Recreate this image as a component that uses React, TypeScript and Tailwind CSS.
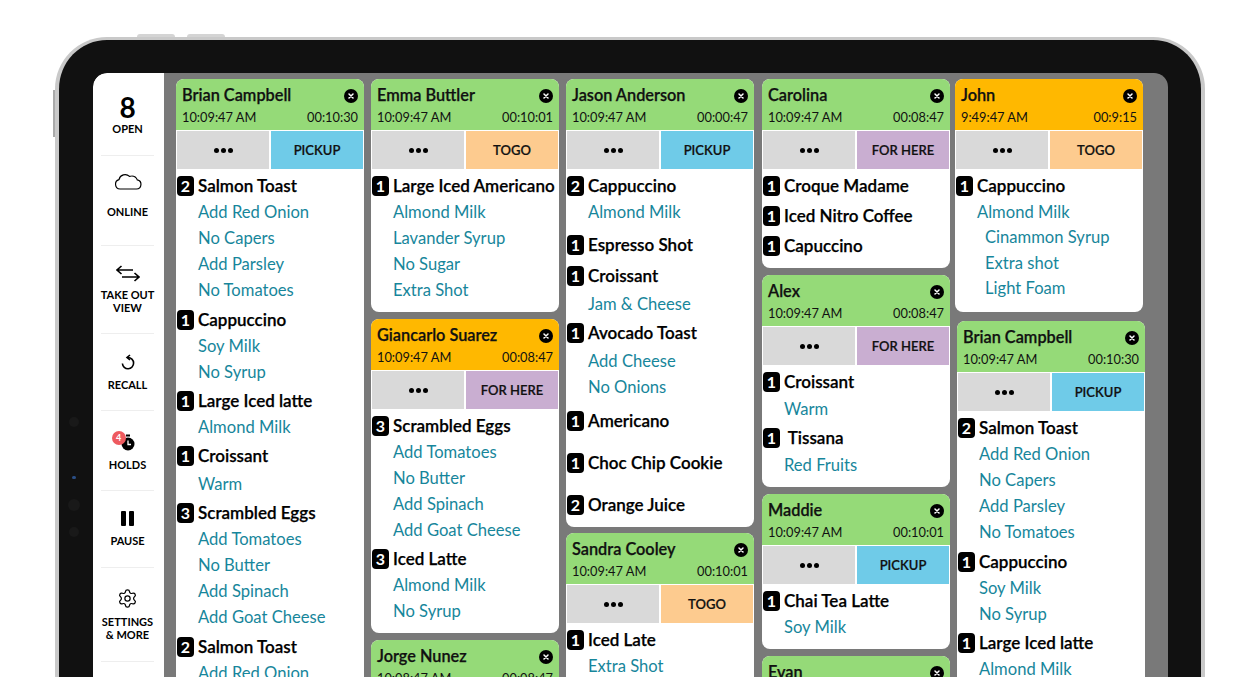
import { Settings } from "lucide-react";

type Row = { q?: number; t: string; c?: string };

type Order = {
  name: string;
  time: string;
  elapsed: string;
  late?: boolean;
  kind: "PICKUP" | "TOGO" | "FOR HERE";
  rows: Row[];
  className?: string;
};

const kindColor = {
  PICKUP: "bg-[#6fcbe8]",
  TOGO: "bg-[#fdcb8f]",
  "FOR HERE": "bg-[#c9aed1]",
};

const salmon: Row[] = [
  { q: 2, t: "Salmon Toast" },
  { t: "Add Red Onion" },
  { t: "No Capers" },
  { t: "Add Parsley" },
  { t: "No Tomatoes" },
  { q: 1, t: "Cappuccino", c: "mt-[4px]" },
  { t: "Soy Milk" },
  { t: "No Syrup" },
  { q: 1, t: "Large Iced latte", c: "mt-[3px]" },
  { t: "Almond Milk" },
];

const columns: { className: string; orders: Order[] }[] = [
  {
    className: "",
    orders: [
      {
        name: "Brian Campbell",
        time: "10:09:47 AM",
        elapsed: "00:10:30",
        kind: "PICKUP",
        rows: [
          ...salmon,
          { q: 1, t: "Croissant", c: "mt-[3px]" },
          { t: "Warm", c: "mt-[2px]" },
          { q: 3, t: "Scrambled Eggs", c: "mt-[3px]" },
          { t: "Add Tomatoes" },
          { t: "No Butter" },
          { t: "Add Spinach" },
          { t: "Add Goat Cheese" },
          { q: 2, t: "Salmon Toast", c: "mt-[4px]" },
          { t: "Add Red Onion" },
        ],
      },
    ],
  },
  {
    className: "ml-[7px]",
    orders: [
      {
        name: "Emma Buttler",
        time: "10:09:47 AM",
        elapsed: "00:10:01",
        kind: "TOGO",
        rows: [
          { q: 1, t: "Large Iced Americano" },
          { t: "Almond Milk" },
          { t: "Lavander Syrup" },
          { t: "No Sugar" },
          { t: "Extra Shot" },
        ],
      },
      {
        name: "Giancarlo Suarez",
        time: "10:09:47 AM",
        elapsed: "00:08:47",
        late: true,
        kind: "FOR HERE",
        className: "mt-[7px]",
        rows: [
          { q: 3, t: "Scrambled Eggs" },
          { t: "Add Tomatoes" },
          { t: "No Butter" },
          { t: "Add Spinach" },
          { t: "Add Goat Cheese" },
          { q: 3, t: "Iced Latte", c: "mt-[3px]" },
          { t: "Almond Milk" },
          { t: "No Syrup" },
        ],
      },
      {
        name: "Jorge Nunez",
        time: "10:08:47 AM",
        elapsed: "00:08:47",
        kind: "TOGO",
        className: "mt-[7px]",
        rows: [],
      },
    ],
  },
  {
    className: "ml-[7px]",
    orders: [
      {
        name: "Jason Anderson",
        time: "10:09:47 AM",
        elapsed: "00:00:47",
        kind: "PICKUP",
        rows: [
          { q: 2, t: "Cappuccino" },
          { t: "Almond Milk" },
          { q: 1, t: "Espresso Shot", c: "mt-[7px]" },
          { q: 1, t: "Croissant", c: "mt-[5px]" },
          { t: "Jam & Cheese", c: "mt-[2px]" },
          { q: 1, t: "Avocado Toast", c: "mt-[3px]" },
          { t: "Add Cheese", c: "mt-[2px]" },
          { t: "No Onions" },
          { q: 1, t: "Americano", c: "mt-[8px]" },
          { q: 1, t: "Choc Chip Cookie", c: "mt-[16px]" },
          { q: 2, t: "Orange Juice", c: "mt-[16px]" },
        ],
      },
      {
        name: "Sandra Cooley",
        time: "10:09:47 AM",
        elapsed: "00:10:01",
        kind: "TOGO",
        className: "mt-[6px]",
        rows: [{ q: 1, t: "Iced Late" }, { t: "Extra Shot" }],
      },
    ],
  },
  {
    className: "ml-[8px]",
    orders: [
      {
        name: "Carolina",
        time: "10:09:47 AM",
        elapsed: "00:08:47",
        kind: "FOR HERE",
        rows: [
          { q: 1, t: "Croque Madame" },
          { q: 1, t: "Iced Nitro Coffee", c: "mt-[4px]" },
          { q: 1, t: "Capuccino", c: "mt-[4px]" },
        ],
      },
      {
        name: "Alex",
        time: "10:09:47 AM",
        elapsed: "00:08:47",
        kind: "FOR HERE",
        className: "mt-[7px]",
        rows: [
          { q: 1, t: "Croissant" },
          { t: "Warm", c: "mt-[1px]" },
          { q: 1, t: "\u00a0Tissana", c: "mt-[3px]" },
          { t: "Red Fruits", c: "mt-[1px]" },
        ],
      },
      {
        name: "Maddie",
        time: "10:09:47 AM",
        elapsed: "00:10:01",
        kind: "PICKUP",
        className: "mt-[7px]",
        rows: [{ q: 1, t: "Chai Tea Latte" }, { t: "Soy Milk" }],
      },
      {
        name: "Evan",
        time: "10:09:47 AM",
        elapsed: "00:10:01",
        kind: "PICKUP",
        className: "mt-[7px]",
        rows: [],
      },
    ],
  },
  {
    className: "ml-[5px]",
    orders: [
      {
        name: "John",
        time: "9:49:47 AM",
        elapsed: "00:9:15",
        late: true,
        kind: "TOGO",
        rows: [
          { q: 1, t: "Cappuccino" },
          { t: "Almond Milk" },
          { t: "Cinammon Syrup", c: "-mt-[1px] ml-[8px]" },
          { t: "Extra shot", c: "ml-[8px]" },
          { t: "Light Foam", c: "-mt-[1px] mb-[2px] ml-[8px]" },
        ],
      },
      {
        name: "Brian Campbell",
        time: "10:09:47 AM",
        elapsed: "00:10:30",
        kind: "PICKUP",
        className: "mt-[9px] ml-[2px] -mr-[2px]",
        rows: salmon,
      },
    ],
  },
];

function CloseDot() {
  return (
    <svg width="14" height="14" viewBox="0 0 14 14">
      <circle cx="7" cy="7" r="7" fill="#000" />
      <path d="M5 5l4 4M9 5l-4 4" stroke="#fff" strokeWidth="1.5" strokeLinecap="round" />
    </svg>
  );
}

function Card({ order }: { order: Order }) {
  return (
    <div className={`overflow-hidden rounded-[8px] bg-white ${order.className ?? ""}`}>
      <div className={`h-[51px] px-[6px] pt-[6px] ${order.late ? "bg-[#ffb800]" : "bg-[#95da78]"}`}>
        <div className="flex h-[21px] items-center justify-between">
          <span className="text-[16.300px] font-semibold text-[#111] [-webkit-text-stroke:0.25px_#111]">{order.name}</span>
          <CloseDot />
        </div>
        <div className="mt-[2px] flex h-[20px] items-center justify-between text-[12.800px] text-[#111]">
          <span>{order.time}</span>
          <span>{order.elapsed}</span>
        </div>
      </div>
      <div className="flex h-[39px] gap-[2px] px-[1px] pt-[1px]">
        <div className="flex flex-1 items-center justify-center gap-[2px] bg-[#d9d9d9]">
          <span className="h-[5px] w-[5px] rounded-full bg-black" />
          <span className="h-[5px] w-[5px] rounded-full bg-black" />
          <span className="h-[5px] w-[5px] rounded-full bg-black" />
        </div>
        <div className={`flex flex-1 items-center justify-center pt-[1px] text-[13px] font-semibold text-[#111] [-webkit-text-stroke:0.2px_#111] ${kindColor[order.kind]}`}>
          {order.kind}
        </div>
      </div>
      <div className="pt-[4px] pb-[9px]">
        {order.rows.map((row, i) =>
          row.q ? (
            <div key={i} className={`flex h-[26px] items-center pl-[1px] ${row.c ?? ""}`}>
              <span className="flex h-[20px] w-[17px] shrink-0 items-center justify-center rounded-[4px] bg-black text-[16px] font-bold text-white">
                {row.q}
              </span>
              <span className="ml-[4px] text-[17px] font-semibold text-black [-webkit-text-stroke:0.25px_#000]">{row.t}</span>
            </div>
          ) : (
            <div key={i} className={`flex h-[26px] items-center pl-[22px] text-[16.600px] text-[#17869b] ${row.c ?? ""}`}>
              {row.t}
            </div>
          ),
        )}
      </div>
    </div>
  );
}

function SideItem({ className, label, children }: { className: string; label: string[]; children: React.ReactNode }) {
  return (
    <div className={`mr-[10px] ml-[8px] flex flex-col items-center justify-center border-b border-[#eeeeee] ${className}`}>
      {children}
      {label.map((l) => (
        <span key={l} className="text-[11px] leading-[13px] font-bold whitespace-nowrap text-black">
          {l}
        </span>
      ))}
    </div>
  );
}

function Sidebar() {
  return (
    <div className="w-[71px] shrink-0 rounded-tl-[14px] bg-white">
      <SideItem className="h-[83px] pb-[2px]" label={["OPEN"]}>
        <span className="text-[28px] leading-[30px] font-bold text-black">8</span>
      </SideItem>
      <SideItem className="h-[90px] pb-[12px]" label={["ONLINE"]}>
        <svg width="28" height="19" viewBox="0 0 28 19" fill="none" stroke="#000" strokeWidth="1.200" className="mb-[15px]">
          <path d="M6 18h16.500a4.600 4.600 0 0 0 .8-9.100A6 6 0 0 0 17.500 5a5.200 5.200 0 0 0-2 .4A6.300 6.300 0 0 0 5 8.600a4.800 4.800 0 0 0 1 9.400z" />
        </svg>
      </SideItem>
      <SideItem className="h-[88px]" label={["TAKE OUT", "VIEW"]}>
        <svg width="24" height="17" viewBox="0 0 24 17" fill="none" stroke="#000" strokeWidth="1.600" className="mb-[6px]">
          <path d="M1 5h16M5.500 1L1 5l4.500 4M6 12h17M18.500 8l4.500 4-4.500 4" />
        </svg>
      </SideItem>
      <SideItem className="h-[77px]" label={["RECALL"]}>
        <svg width="16" height="17" viewBox="0 0 16 17" fill="none" stroke="#000" strokeWidth="1.600" className="mb-[7px]">
          <path d="M8 3.500A5.600 5.600 0 1 1 2.400 9.500M10 1L7 3.500 10 6" />
        </svg>
      </SideItem>
      <SideItem className="h-[80px]" label={["HOLDS"]}>
        <div className="relative mb-[7px] -ml-[4px] h-[20px] w-[28px]">
          <svg width="16" height="18" viewBox="0 0 16 18" className="absolute top-[3px] left-[8px]">
            <circle cx="8" cy="10" r="6.500" fill="#000" />
            <rect x="6" y="0.500" width="4" height="2" fill="#000" />
            <path d="M8 6.500v4h3" stroke="#fff" strokeWidth="1.300" fill="none" />
          </svg>
          <span className="absolute top-0 left-0 flex h-[14px] w-[14px] items-center justify-center rounded-full bg-[#ee5a5f] text-[9px] font-bold text-white">
            4
          </span>
        </div>
      </SideItem>
      <SideItem className="h-[77px]" label={["PAUSE"]}>
        <div className="mb-[8px] flex h-[15px] gap-[3px]">
          <span className="w-[5px] rounded-[1px] bg-black" />
          <span className="w-[5px] rounded-[1px] bg-black" />
        </div>
      </SideItem>
      <SideItem className="h-[94px]" label={["SETTINGS", "& MORE"]}>
        <Settings size={21} strokeWidth={1.4} className="mb-[6px] text-black" />
      </SideItem>
    </div>
  );
}

export default function App() {
  return (
    <div className="h-[677px] w-[1260px] overflow-hidden bg-white pt-[37px] pl-[55px] font-['Lato',sans-serif]">
      <div className="relative h-[660px] w-[1150px] rounded-t-[52px] border-x-[4px] border-t-[3px] border-[#c9c9c9] bg-[#111111] pt-[33px] pr-[33px] pl-[34px]">
        <span className="absolute -top-[6px] left-[78px] h-[3px] w-[38px] rounded-t-sm bg-[#d4d4d4]" />
        <span className="absolute -top-[6px] left-[128px] h-[3px] w-[38px] rounded-t-sm bg-[#d4d4d4]" />
        <span className="absolute top-[50px] -left-[6px] h-[47px] w-[2px] bg-[#a9a9a9]" />
        <span className="absolute top-[377px] left-[10px] h-[10px] w-[10px] rounded-full bg-[#191919]" />
        <span className="absolute top-[436px] left-[13px] h-[3px] w-[4px] rounded-full bg-[#2b4f86]" />
        <span className="absolute top-[459px] left-[9px] h-[12px] w-[12px] rounded-full bg-[#191919]" />
        <span className="absolute top-[487px] left-[10px] h-[10px] w-[10px] rounded-full bg-[#191919]" />
        <div className="flex h-[640px] overflow-hidden rounded-t-[14px]">
          <Sidebar />
          <div className="flex flex-1 items-start overflow-hidden rounded-tr-[12px] bg-[#797979] pt-[6px] pl-[12px]">
            {columns.map((col, i) => (
              <div key={i} className={`w-[188px] shrink-0 ${col.className}`}>
                {col.orders.map((o, j) => (
                  <Card key={j} order={o} />
                ))}
              </div>
            ))}
          </div>
        </div>
      </div>
    </div>
  );
}
